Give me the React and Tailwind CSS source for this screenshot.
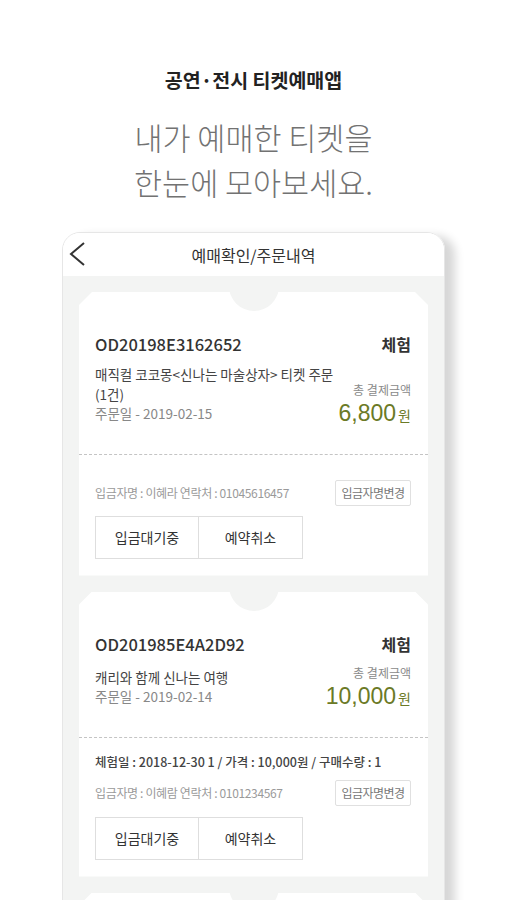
import React from 'react'

const font = { fontFamily: '"Noto Sans CJK KR", "Noto Sans", sans-serif' }
const numFont = { fontFamily: '"Liberation Sans", Arial, sans-serif' }

const tickets = [
  {
    id: 'OD20198E3162652',
    name: ['매직컬 코코몽<신나는 마술상자> 티켓 주문', '(1건)'],
    date: '2019-02-15',
    amount: '6,800',
    payer: '입금자명 : 이혜라 연락처 : 01045616457',
  },
  {
    id: 'OD201985E4A2D92',
    name: ['캐리와 함께 신나는 여행'],
    date: '2019-02-14',
    amount: '10,000',
    detail: '체험일 : 2018-12-30 1 / 가격 : 10,000원 / 구매수량 : 1',
    payer: '입금자명 : 이혜람 연락처 : 0101234567',
  },
]

function Ticket({ t }) {
  return (
    <div className="relative bg-white [clip-path:polygon(13px_0,calc(100%-13px)_0,100%_13px,100%_100%,0_100%,0_13px)]">
      {/* top notch */}
      <div className="absolute left-1/2 top-[-31px] h-[50px] w-[50px] -translate-x-1/2 rounded-full bg-[#f3f4f3]" />

      <div className="px-[16px] pt-[41px] pb-[30px]">
        <div className="flex items-center justify-between leading-[22px]">
          <span className="text-[16.5px] font-medium text-[#333]">{t.id}</span>
          <span className="mr-[1px] text-[16px] font-bold text-[#333]">체험</span>
        </div>
        <div className="mt-[10px] flex items-end justify-between">
          <div className="min-w-0 text-[13.5px] leading-[19.5px]">
            <div className="whitespace-nowrap text-[#444]">
              {t.name.map((n, i) => (
                <React.Fragment key={n}>
                  {i > 0 && <br />}
                  {n}
                </React.Fragment>
              ))}
            </div>
            <div className="text-[#888]">주문일 - {t.date}</div>
          </div>
          <div className="mr-[1px] flex shrink-0 flex-col items-end">
            <span className="text-[12px] leading-[16px] text-[#8a8a8a]">총 결제금액</span>
            <span className="mt-[6px] flex items-baseline leading-[18px] text-[#6b7a26]">
              <span className="text-[23px]" style={numFont}>{t.amount}</span>
              <span className="ml-[2px] text-[14px]">원</span>
            </span>
          </div>
        </div>
      </div>

      <div className="border-t border-dashed border-[#c4c4c4]" />

      <div className={`px-[16px] pb-[17px] ${t.detail ? 'pt-[15px]' : 'pt-[25px]'}`}>
        {t.detail && (
          <div className="text-[12.5px] font-medium leading-[18px] text-[#444]">{t.detail}</div>
        )}
        <div className={`flex items-center justify-between ${t.detail ? 'mt-[9px]' : ''}`}>
          <span className="text-[12px] tracking-[-0.35px] text-[#9a9a9a]">{t.payer}</span>
          <button className="mr-[1px] h-[26px] w-[76px] rounded-[2px] border border-[#e0e0e0] text-[12px] tracking-[-0.5px] text-[#777]">
            입금자명변경
          </button>
        </div>
        <div className={`flex ${t.detail ? 'mt-[11px]' : 'mt-[10px]'}`}>
          <button className="h-[43px] w-[104px] border border-[#dedede] text-[14px] text-[#333]">입금대기중</button>
          <button className="h-[43px] w-[104px] border border-l-0 border-[#dedede] text-[14px] text-[#333]">예약취소</button>
        </div>
      </div>
    </div>
  )
}

export default function App() {
  return (
    <div className="flex h-[900px] flex-col items-center overflow-hidden bg-white" style={font}>
      <h1 className="mt-[67px] text-[19.5px] font-bold leading-[26px] text-[#222]">공연·전시 티켓예매앱</h1>
      <p className="mt-[22px] text-center text-[30.5px] font-light leading-[45px] text-[#727272]">
        내가 예매한 티켓을
        <br />
        한눈에 모아보세요.
      </p>

      <div className="mt-[27px] h-[700px] w-[383px] shrink-0 overflow-hidden rounded-t-[18px] border border-[#e6e6e6] shadow-[10px_4px_10px_rgba(0,0,0,0.16)]">
        <header className="relative flex h-[43px] items-center justify-center bg-white">
          <svg className="absolute left-[4px] top-[8px]" width="22" height="26" viewBox="0 0 22 26" fill="none">
            <polyline points="17,2 4,13 17,24" stroke="#333" strokeWidth="2" strokeLinejoin="miter" />
          </svg>
          <span className="text-[16px] text-[#333]">예매확인/주문내역</span>
        </header>

        <div className="flex h-full flex-col gap-[16px] bg-[#f3f4f3] px-[16px] pt-[16px]">
          {tickets.map((t) => (
            <Ticket key={t.id} t={t} />
          ))}
          <div className="relative h-[60px] shrink-0 bg-white [clip-path:polygon(13px_0,calc(100%-13px)_0,100%_13px,100%_100%,0_100%,0_13px)]">
            <div className="absolute left-1/2 top-[-31px] h-[50px] w-[50px] -translate-x-1/2 rounded-full bg-[#f3f4f3]" />
          </div>
        </div>
      </div>
    </div>
  )
}
